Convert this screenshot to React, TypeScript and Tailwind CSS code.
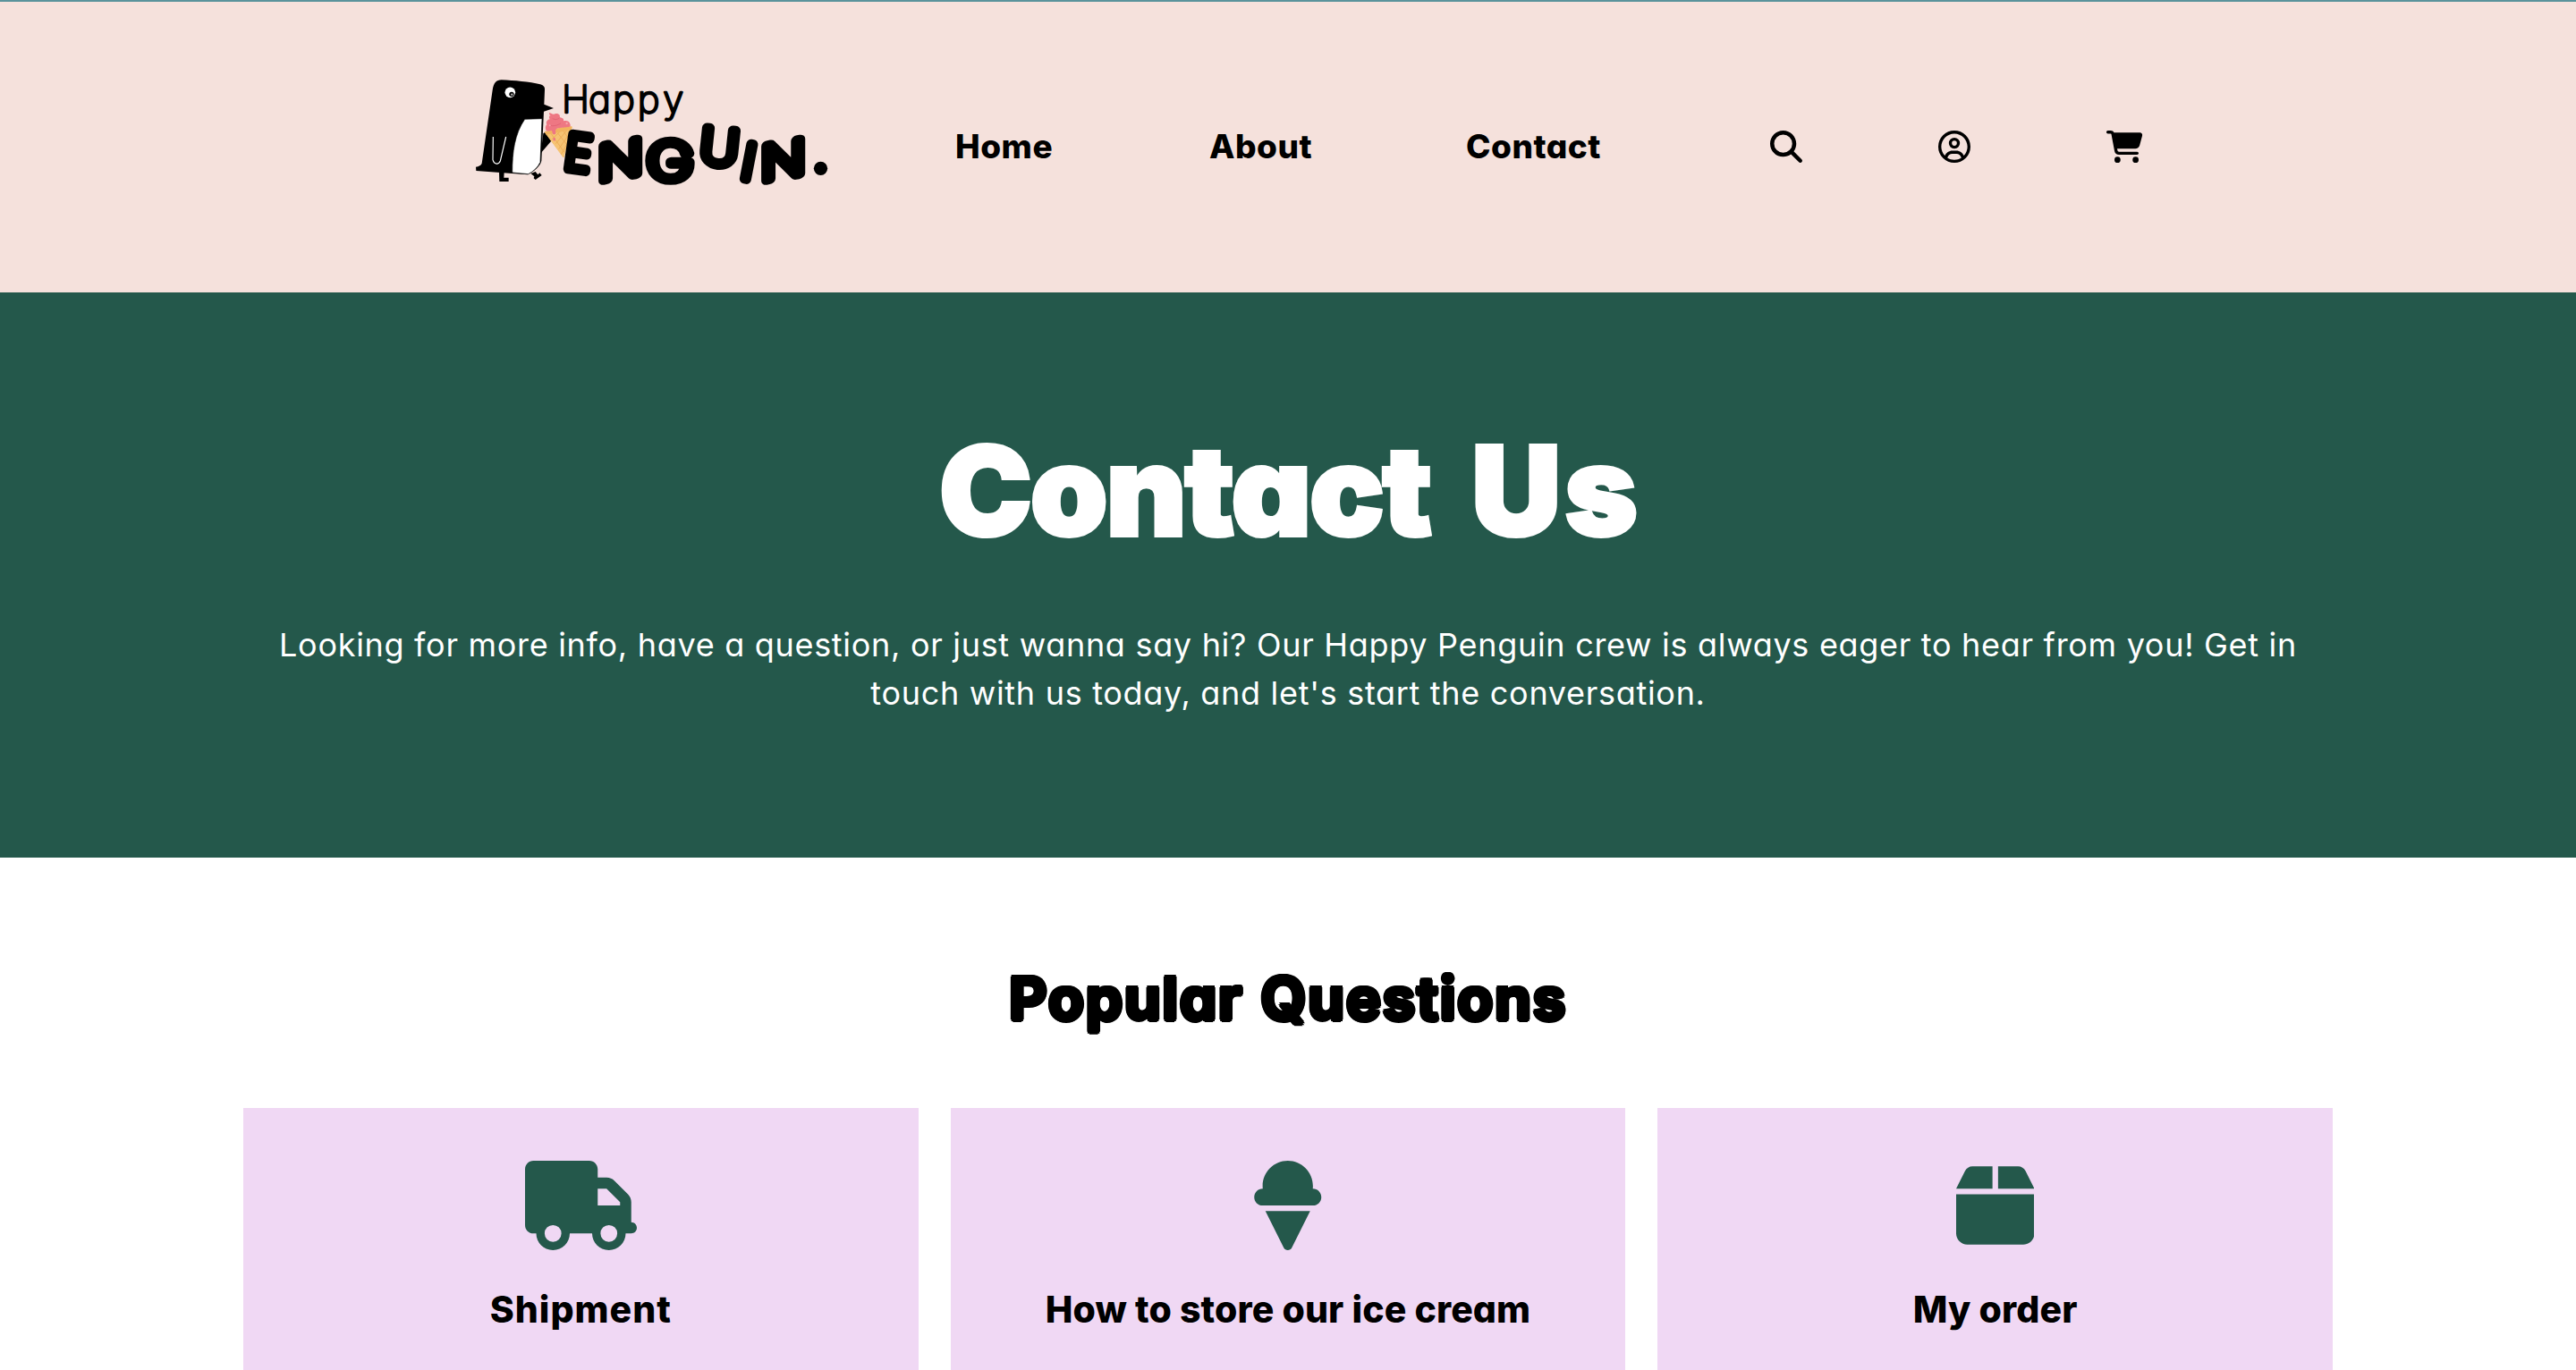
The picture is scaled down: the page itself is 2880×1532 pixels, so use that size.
import {
  FaBox,
  FaCartShopping,
  FaIceCream,
  FaMagnifyingGlass,
  FaRegCircleUser,
  FaTruck,
} from "react-icons/fa6";

const letters = [
  { ch: "E", x: 372, y: 361, rot: 8, skew: 0, size: 162, sx: 0.92 },
  { ch: "N", x: 521, y: 384, rot: 0, skew: -10, size: 160, sx: 1.22 },
  { ch: "G", x: 688, y: 394, rot: 0, skew: 0, size: 174, sx: 1.22 },
  { ch: "U", x: 847, y: 342, rot: 6, skew: 0, size: 164, sx: 1.08 },
  { ch: "I", x: 940, y: 391, rot: 11, skew: 0, size: 164, sx: 1 },
  { ch: "N", x: 1067, y: 384, rot: 0, skew: -10, size: 160, sx: 1.22 },
];

function Logo() {
  return (
    <svg viewBox="0 0 1260 450" className="mb-[37px] block h-[150px] w-[420px]" aria-label="Happy Penguin">
      {/* body */}
      <path
        d="M92 92C96 68 104 59 122 58C165 60 215 64 252 73C264 77 268 82 267 92L265 140L297 153L264 164L256 330C252 348 230 366 210 376L158 372L37 363L36 350C46 348 54 344 56 338Z"
        fill="#000"
      />
      <path d="M262 238L272 230L290 262L254 304Z" fill="#000" />
      {/* belly */}
      <path
        d="M200 190L258 188L252 334C244 352 228 366 212 374L158 369C158 300 166 240 200 190Z"
        fill="#fff"
        stroke="#000"
        strokeWidth="2"
      />
      {/* wing */}
      <path d="M94 249L93 326C97 342 112 344 118 330L137 249" fill="none" stroke="#fff" strokeWidth="3.5" />
      {/* eye */}
      <circle cx="151" cy="100" r="17.5" fill="#fff" />
      <circle cx="156" cy="106" r="8" fill="#000" />
      <circle cx="157" cy="107" r="3.5" fill="#bbb" />
      {/* feet */}
      <path d="M114 368H131L130 386H146V399H115Z" fill="#000" />
      <path d="M220 372L236 366L244 376L250 370L257 378L236 393L230 388L232 382Z" fill="#000" />
      {/* ice cream */}
      <path d="M268 234L358 216L330 318Z" fill="#f6c373" stroke="#f6c373" strokeWidth="3" strokeLinejoin="round" />
      <path
        d="M288 238L332 300M310 236L342 276M330 230L348 256M342 226L304 272M320 230L290 258M354 232L314 290M346 266L322 308"
        stroke="#eba853"
        strokeWidth="2.5"
        fill="none"
      />
      <path d="M266 232L272 242L356 225L358 214L340 214L290 224Z" fill="#f1b35f" />
      <path
        d="M283 168C291 170 293 176 304 171C316 170 320 178 317 184C328 185 332 190 330 196C342 193 351 198 352 206C355 212 353 216 346 216L318 219C310 220 304 222 303 228L304 236C303 243 294 242 293 236L291 228C286 228 280 232 272 228C268 222 269 212 274 208C270 200 275 192 284 190C280 184 281 178 287 178C282 176 281 171 283 168Z"
        fill="#ee7783"
      />
      <ellipse cx="299" cy="257" rx="4" ry="5.500" fill="#ee7783" />
      <path
        d="M294 188C302 193 312 191 317 185M284 210C294 215 310 211 320 204"
        fill="none"
        stroke="#e36575"
        strokeWidth="3"
        strokeLinecap="round"
      />
      <circle cx="284" cy="211" r="3" fill="#f7a3aa" />
      <circle cx="341" cy="204" r="3.5" fill="#f7a3aa" />
      {/* wordmark */}
      <text
        x="324 414 495 578 664"
        y="167"
        fontSize="126"
        fontFamily="Inter"
        fontWeight="200"
        stroke="#000"
        strokeWidth="7"
        strokeLinejoin="round"
        className="[font-feature-settings:'cv11']"
      >
        Happy
      </text>
      {letters.map((l, i) => (
        <text
          key={i}
          transform={`translate(${l.x} ${l.y}) rotate(${l.rot}) skewY(${l.skew}) scale(${l.sx} 1)`}
          textAnchor="middle"
          fontFamily="Inter"
          fontWeight="200"
          fontSize={l.size}
          stroke="#000"
          strokeWidth="32"
          strokeLinejoin="round"
        >
          {l.ch}
        </text>
      ))}
      <circle cx="1192.500" cy="355" r="23" fill="#000" />
    </svg>
  );
}

const cards = [
  { label: "Shipment", Icon: FaTruck, size: "w-[125px]", tracking: "tracking-[1px]" },
  { label: "How to store our ice cream", Icon: FaIceCream, size: "w-[87.5px]", tracking: "tracking-[0.1px]" },
  { label: "My order", Icon: FaBox, size: "w-[87.5px]", tracking: "tracking-[0.1px]" },
];

export default function App() {
  return (
    <div className="h-[1532px] w-full overflow-hidden bg-white font-['Inter',sans-serif] text-black [font-feature-settings:'cv11']">
      <header className="h-[327px] border-t-2 border-[#5a939c] bg-[#f5e1dc] pb-[2px] pl-[520px]">
        <nav className="grid h-full grid-cols-[548px_284px_287px_340px_188px_188px_auto] items-center text-[37px] font-extrabold leading-none tracking-[0.5px]">
          <Logo />
          <a>Home</a>
          <a>About</a>
          <a>Contact</a>
          <FaMagnifyingGlass className="size-[36px]" />
          <FaRegCircleUser className="size-[36px]" />
          <FaCartShopping className="h-[36px] w-[40.5px]" />
        </nav>
      </header>

      <section className="flex h-[632px] flex-col items-center bg-[#24584b] pt-[150px] text-center text-white">
        <h1 className="flex gap-[46px] pl-[5px] text-[139px] font-black leading-[144px] [-webkit-text-stroke:4px_white]">
          <span className="tracking-[-2.2px]">Contact</span>
          <span className="tracking-[4px]">Us</span>
        </h1>
        <p className="mt-[73px] whitespace-nowrap text-[36px] leading-[54px] tracking-[0.7px]">
          Looking for more info, have a question, or just wanna say hi? Our Happy Penguin crew is always eager to hear from you! Get in
          <br />
          touch with us today, and let's start the conversation.
        </p>
      </section>

      <section className="flex flex-col items-center px-[272px] pt-[117px]">
        <h2 className="text-[66px] font-bold leading-[80px] tracking-[1.5px] [word-spacing:2px] [text-shadow:2.5px_0_#000,-2.5px_0_#000,0_2.5px_#000,0_-2.5px_#000,1.8px_1.8px_#000,-1.8px_1.8px_#000,1.8px_-1.8px_#000,-1.8px_-1.8px_#000]">
          Popular Questions
        </h2>
        <div className="mt-[83px] grid w-full grid-cols-3 gap-[36px]">
          {cards.map(({ label, Icon, size, tracking }) => (
            <div key={label} className="flex h-[400px] flex-col items-center bg-[#f0d8f4] pt-[59px]">
              <Icon className={`h-[100px] text-[#24584b] ${size}`} />
              <h3 className={`mt-[41px] text-[41px] font-extrabold leading-[50px] ${tracking}`}>{label}</h3>
            </div>
          ))}
        </div>
      </section>
    </div>
  );
}
